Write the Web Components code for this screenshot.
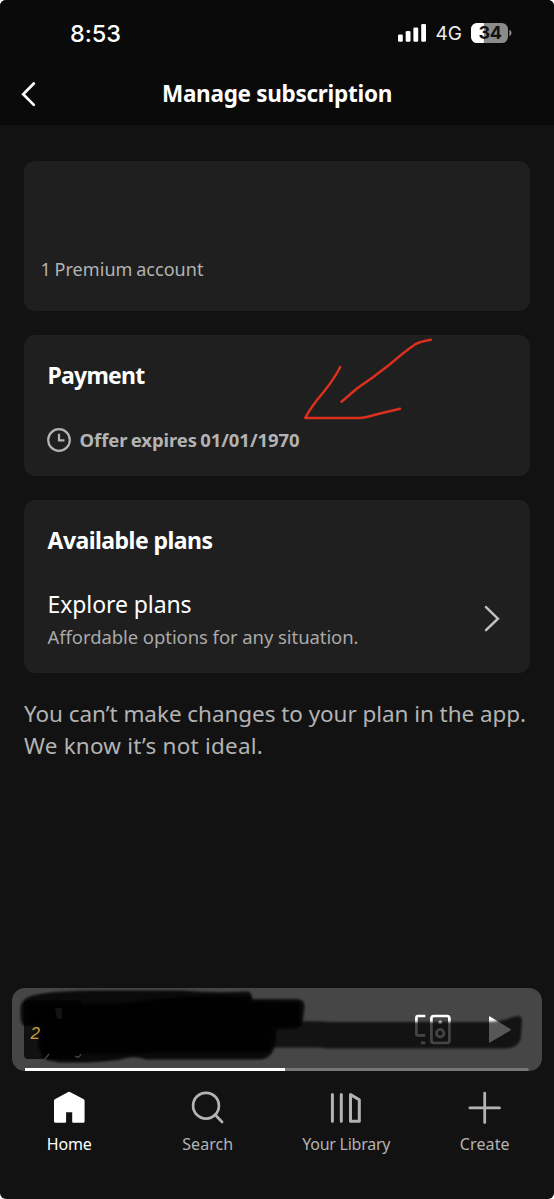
<!DOCTYPE html>
<html lang="en">
<head>
<meta charset="utf-8">
<title>Manage subscription</title>
<style>
html,body{margin:0;background:#fff}
body{width:554px;height:1199px;overflow:hidden;font-family:"Noto Sans","Open Sans",sans-serif;color:#fff}
</style>
</head>
<body>
<subscription-app></subscription-app>
<script>
const define=(name,html,ready)=>{
  const t=document.createElement('template');t.innerHTML=html;
  customElements.define(name,class extends HTMLElement{
    constructor(){super();this.attachShadow({mode:'open'}).append(t.content.cloneNode(true));}
    connectedCallback(){if(ready)ready.call(this,this.shadowRoot);}
  });
};

/* A single line of text whose tracking is adjusted to span a given width. */
define('fit-text',`<style>:host{display:block;white-space:nowrap}span{display:inline-block}</style><span><slot></slot></span>`,function(r){
  const s=r.querySelector('span'),w=+this.getAttribute('width'),n=this.textContent.length;
  s.style.letterSpacing='0px';
  s.style.letterSpacing=((w-s.getBoundingClientRect().width)/n)+'px';
});

define('status-bar',`<style>
:host{display:flex;height:66px;padding:1px 42px 0 70px;box-sizing:border-box;align-items:center;font-family:Inter,sans-serif}
.time{font-size:23.5px;font-weight:500;line-height:28px;margin-right:auto}
.net{font-size:19px;line-height:24px;color:#eee;margin:1px 9px 0 8.5px}
svg{display:block}
.sig{margin-top:-2px}
.bat{width:41px;height:20px;display:grid;margin-top:-1px}
.bat>*{grid-area:1/1}
.bat fit-text{color:#111;font-size:18px;font-weight:700;line-height:20px;padding-left:7.5px}
</style>
<fit-text class="time" width="51">8:53</fit-text>
<svg class="sig" width="29" height="18" viewBox="399 24 29 18" fill="#fff"><rect x="399" y="34.4" width="4.8" height="7.4" rx="1.3"/><rect x="406.7" y="31" width="4.8" height="10.8" rx="1.3"/><rect x="414.4" y="27.4" width="4.8" height="14.4" rx="1.3"/><rect x="422.2" y="24" width="4.8" height="17.8" rx="1.3"/></svg>
<fit-text class="net" width="26.5">4G</fit-text>
<div class="bat"><svg width="41" height="20" viewBox="0 0 41 20"><defs><clipPath id="b"><rect width="37" height="20" rx="6.3"/></clipPath></defs><g clip-path="url(#b)"><rect width="37" height="20" fill="#8b8b8b"/><rect width="12.8" height="20" fill="#fff"/></g><path d="M38.3 6.8Q40.5 7.7 40.5 10T38.3 13.2Z" fill="#8b8b8b"/></svg><fit-text width="23">34</fit-text></div>`);

define('nav-header',`<style>
:host{display:grid;grid-template-columns:60px 1fr 60px;height:59px;box-sizing:border-box;padding-top:12px;align-items:start}
svg{display:block;margin:3px 0 0 20px}
fit-text{justify-self:center;font-size:22.5px;font-weight:700;line-height:32px}
</style>
<svg width="18" height="26" viewBox="20 81 18 26" fill="none" stroke="#fff" stroke-width="2.7" stroke-linecap="round" stroke-linejoin="miter"><path d="M33.8 83.5 23.2 94.2 33.8 104.9"/></svg>
<fit-text width="230"><slot></slot></fit-text>`,function(r){
  const f=r.querySelector('fit-text');f.textContent=this.textContent;f.connectedCallback();
});

define('info-card',`<style>:host{display:block;box-sizing:border-box;background:#1f1f1f;border-radius:11px;padding:23.5px 23.5px}</style><slot></slot>`);

define('expiry-row',`<style>
:host{display:flex;align-items:center;margin-top:37px;height:24px;color:#b3b3b3;font-size:18.5px;font-weight:700;line-height:24px}
svg{display:block;margin:0 8.5px 0 -.5px}
fit-text{word-spacing:-1.5px}
</style>
<svg width="24" height="24" viewBox="47 428 24 24" fill="none" stroke="#b3b3b3" stroke-width="2.2"><circle cx="59" cy="440" r="10.8"/><path d="M59 433.8V440.3H64.5"/></svg>
<fit-text width="220">Offer expires 01/01/1970</fit-text>`);

define('plan-row',`<style>
:host{display:flex;justify-content:space-between;align-items:center;margin-top:32px}
.a{font-size:23px;line-height:32px}
.b{font-size:18.5px;line-height:24px;color:#a9a9a9;margin-top:5px}
svg{display:block;margin:2px 6px 0 0}
</style>
<div><fit-text class="a" width="144">Explore plans</fit-text><fit-text class="b" width="311">Affordable options for any situation.</fit-text></div>
<svg width="18" height="28" viewBox="483 605 18 28" fill="none" stroke="#c0c0c0" stroke-width="2.5" stroke-linecap="round"><path d="M486 607.2 497.9 618.7 486 630.2"/></svg>`);

define('hand-arrow',`<style>:host{display:block;position:absolute;left:296px;top:330px;pointer-events:none}svg{display:block}</style>
<svg width="145" height="96" viewBox="296 330 145 96" fill="none" stroke="#dc301d" stroke-width="2.5" stroke-linecap="round" stroke-linejoin="round"><path d="M430.8 339.7 Q418 342 415 344.5 Q404 352 390 364.3 Q374 377 357 388.5 L341.5 401.7"/><path d="M340.3 367 Q334 379 324 391.5 Q310 408 305.3 417.9 H358 Q364 418.3 376 414.5 L400 408.8"/></svg>`);

define('now-playing',`<style>
:host{display:block;margin:0 12px;height:83px;background:#464646;border-radius:13px;overflow:hidden}
svg{display:block}
</style>
<svg width="530" height="83" viewBox="12 988 530 83">
<defs><filter id="s" x="-5%" y="-15%" width="110%" height="130%"><feGaussianBlur stdDeviation="1.1"/></filter></defs>
<rect x="24" y="1000" width="58" height="59" rx="4" fill="#111"/>
<g fill="none" stroke="#fff" stroke-width="2.7" stroke-linecap="butt" stroke-linejoin="round"><path d="M425.3 1016H418Q416.4 1016 416.4 1018V1033.5Q416.4 1035.4 418 1035.4H425.3M421 1042.8H425.3"/><rect x="431.4" y="1016" width="18" height="27" rx="2.5"/><circle cx="440.2" cy="1033.2" r="3.7"/></g>
<circle cx="440.2" cy="1022.4" r="1.8" fill="#fff"/>
<path d="M489 1017Q489 1016 490 1016.6L510.5 1029Q511.2 1029.7 510.5 1030.4L490 1042.4Q489 1042.8 489 1042Z" fill="#fff"/>
<path filter="url(#s)" d="M274 1021.2H320Q326 1022 334 1022H488Q502 1021.5 513 1017Q521 1014 522 1019L521 1036Q520 1047 507 1048.5H325L318 1047.5H270Z" fill="#000" fill-opacity=".73"/>
<path d="M489 1022.5H499.5L510.5 1029Q511.2 1029.7 510.5 1030.4L490 1042.4Q489 1042.8 489 1042Z" fill="#fff" fill-opacity=".1"/>
<path filter="url(#s)" d="M20.5 1010Q20 998 35 995Q58 990 110 990.5L180 990.5Q215 993.5 248 991.5Q252 992 252 999H296Q305 999 304.5 1007L303 1020Q302 1029 293 1029H277L275 1045Q272 1059 259 1059.5H146Q132 1055 119 1060Q96 1063 60 1062.5L46 1060L38 1047V1026H25Q20 1026 20.5 1010Z" fill="#000" fill-opacity=".85"/>
<path filter="url(#s)" d="M82 1004Q120 1005 150 1000Q195 994 251 997V1002L300 1003V1025H274L270 1052H160L132 1054H80L42 1058V1022H27V1003Z" fill="#000" fill-opacity=".9"/>
<path d="M75 1056Q79 1059 81 1054M45 1059 49 1054" fill="none" stroke="#777" stroke-opacity=".55" stroke-width="1.5"/><path d="M55 1008H62V1019H57Z" fill="#777" fill-opacity=".15"/>
<text x="30.5" y="1038.5" font-family="Liberation Sans,sans-serif" font-style="italic" font-weight="400" font-size="17" fill="#c7a13e">2</text>
<path d="M25 1069.5H528.5" stroke="#777" stroke-width="3"/><path d="M25 1069.5H285" stroke="#fff" stroke-width="3"/>
</svg>`);

define('tab-item',`<style>
:host{display:flex;flex-direction:column;align-items:center;color:#b3b3b3;font-size:16px;line-height:20px;gap:9px}
:host([active]){color:#fff}
</style><slot name="icon"></slot><fit-text></fit-text>`,function(r){
  const f=r.querySelector('fit-text');f.setAttribute('width',this.getAttribute('span'));f.textContent=this.getAttribute('label');f.connectedCallback();
});

define('tab-bar',`<style>
:host{display:grid;grid-template-columns:repeat(4,1fr);padding-top:18px}
svg{display:block}
</style>
<tab-item active label="Home" span="45"><svg slot="icon" width="36" height="36" viewBox="51.2 1089 36 36" fill="currentColor"><path d="M68 1092.2Q69.3 1091.4 70.6 1092.2L84 1099.3Q84.8 1099.8 84.8 1101V1121.6Q84.8 1122.7 83.7 1122.7H73.4Q72.4 1122.7 72.4 1121.7V1112.2H66.3V1121.7Q66.3 1122.7 65.3 1122.7H55.3Q54.2 1122.7 54.2 1121.6V1101Q54.2 1099.8 55 1099.3Z"/></svg></tab-item>
<tab-item label="Search" span="51"><svg slot="icon" width="36" height="36" viewBox="189.7 1089 36 36" fill="none" stroke="currentColor" stroke-width="2.7" stroke-linecap="round"><circle cx="205.7" cy="1105.7" r="12.9"/><path d="M214.8 1114.8 221.8 1122"/></svg></tab-item>
<tab-item label="Your Library" span="88"><svg slot="icon" width="36" height="36" viewBox="328.2 1089 36 36" fill="none" stroke="currentColor" stroke-width="3" stroke-linecap="round" stroke-linejoin="round"><path d="M332.6 1094.6V1121.2M341.5 1094.6V1121.2M350.7 1094.6 359.5 1099.7V1121.2H350.7Z"/></svg></tab-item>
<tab-item label="Create" span="50"><svg slot="icon" width="36" height="36" viewBox="466.7 1089 36 36" fill="none" stroke="currentColor" stroke-width="2.8" stroke-linecap="round"><path d="M484.4 1093.2V1122.5M469.6 1107.9H499.2"/></svg></tab-item>`);

define('subscription-app',`<style>
:host{display:flex;flex-direction:column;position:relative;width:554px;height:1199px;background:#121212;border-radius:6px;overflow:hidden}
header{background:#0a0a0a}
main{display:flex;flex-direction:column;gap:24px;padding:36px 24px 0;flex:1}
.account{height:150.4px;padding:96px 16.5px 0}
.account fit-text{font-size:18px;line-height:24px;color:#b3b3b3;word-spacing:-1px}
.pay{height:141px}.plans{height:172.5px}
.h{font-size:23px;font-weight:700;line-height:32px}
.note{color:#b3b3b3;font-size:22.5px;line-height:32px;padding-top:1px}
footer{height:211px}
</style>
<header><status-bar></status-bar><nav-header>Manage subscription</nav-header></header>
<main>
<info-card class="account"><fit-text width="163">1 Premium account</fit-text></info-card>
<info-card class="pay"><fit-text class="h" width="97">Payment</fit-text><expiry-row></expiry-row></info-card>
<info-card class="plans"><fit-text class="h" width="165">Available plans</fit-text><plan-row></plan-row></info-card>
<div class="note"><fit-text width="502">You can’t make changes to your plan in the app.</fit-text><fit-text width="239">We know it’s not ideal.</fit-text></div>
</main>
<footer><now-playing></now-playing><tab-bar></tab-bar></footer>
<hand-arrow></hand-arrow>`);
</script>
</body>
</html>
